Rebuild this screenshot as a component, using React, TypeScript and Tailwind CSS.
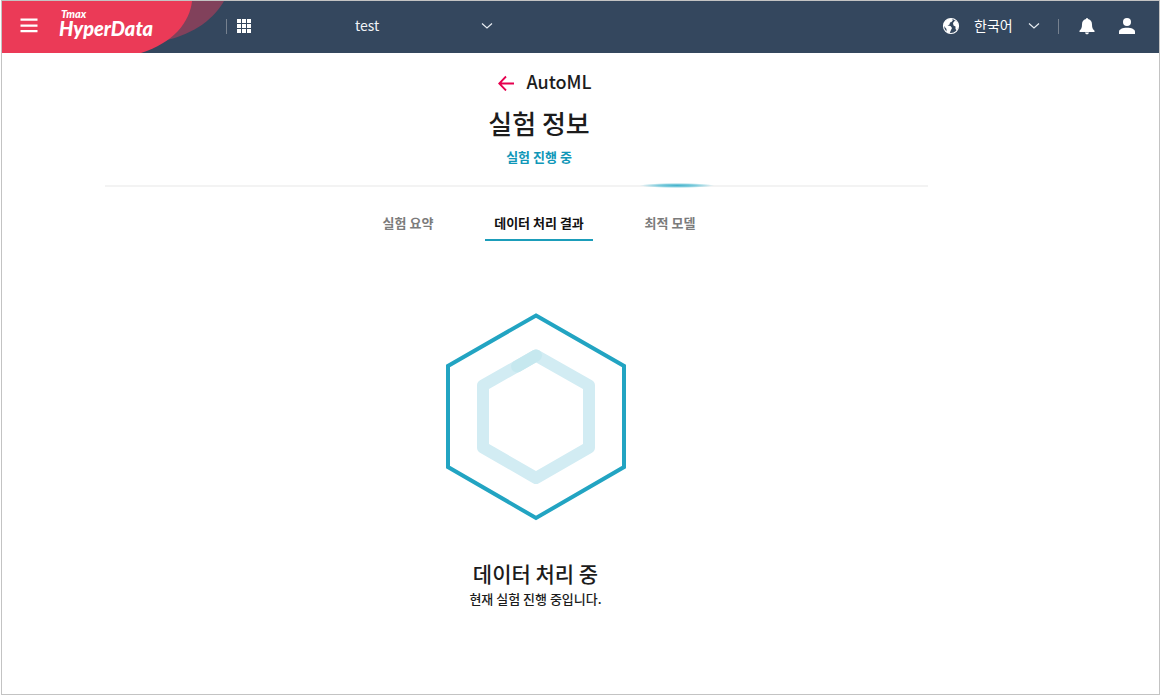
import React from "react";

const tabs = [
  { label: "실험 요약", active: false },
  { label: "데이터 처리 결과", active: true },
  { label: "최적 모델", active: false },
];

function Chevron() {
  return (
    <svg className="pointer-events-none h-3 w-3 shrink-0" viewBox="0 0 12 12" fill="none" stroke="#e8edf2" strokeWidth="1.2" aria-hidden="true">
      <path d="M1 4.500l5 4.500 5-4.500" />
    </svg>
  );
}

function Logo() {
  return (
    <a href="#home" className="flex flex-col pb-2 font-[Lato] font-black text-white italic" aria-label="Tmax HyperData">
      <span className="pl-0.5 text-[11px] leading-3">Tmax</span>
      <span className="text-[20px] leading-4">HyperData</span>
    </a>
  );
}

function Header() {
  return (
    <header className="relative flex h-[52px] items-center bg-[#34475e] pb-0.5">
      <svg className="absolute top-0 left-0 h-[52px] w-[224px]" viewBox="0 0 224 52" aria-hidden="true">
        <path d="M180 0H222C213 16 194 33 161 40Z" fill="#81415b" />
        <path d="M0 0H190C188 21 171 42 139 52H0Z" fill="#eb3a57" />
      </svg>
      <div className="relative flex w-[224px] shrink-0 items-center gap-[21px] pl-[18px]">
        <button type="button" aria-label="메뉴">
          <svg className="h-[18px] w-[18px]" viewBox="0 0 18 18" fill="#fff" aria-hidden="true">
            <path d="M.5 1.500h17v2.300H.5zM.5 7.500h17v2.300H.5zM.5 13h17v2.300H.5z" />
          </svg>
        </button>
        <Logo />
      </div>
      <span className="h-[15px] w-px bg-[#76818f]" />
      <button type="button" aria-label="앱 목록" className="ml-2.5">
        <svg className="h-3.5 w-3.5" viewBox="0 0 14 14" fill="#fff" aria-hidden="true">
          <path d="M0 0h4v4H0zM5 0h4v4H5zM10 0h4v4h-4zM0 5h4v4H0zM5 5h4v4H5zM10 5h4v4h-4zM0 10h4v4H0zM5 10h4v4H5zM10 10h4v4h-4z" />
        </svg>
      </button>
      <div className="ml-[104px] flex w-[138px] items-center pb-0.5">
        <select aria-label="프로젝트" className="-mr-3 min-w-0 flex-1 appearance-none bg-transparent text-sm leading-6 text-[#f0f3f6]">
          <option>test</option>
        </select>
        <Chevron />
      </div>
      <div className="ml-auto flex items-center pr-6">
        <svg className="mr-3.5 h-[18px] w-[18px]" viewBox="0 0 18 18" aria-hidden="true">
          <circle cx="9" cy="9" r="7.500" fill="#34475e" stroke="#fff" strokeWidth="1.200" />
          <path d="M9 1.500L11 3 9.500 5 8 5.500 7.500 7.500 5.500 8.500 8.500 9 10 11 9 13 7.500 16.500 4.500 15 4.500 12 2 9 2 5.500 5 2.500Z" fill="#fff" />
          <path d="M11 6L13 3.500 15.500 5.500 16.500 9 15 13.500 13.500 12 13.500 9.500 11.500 8.500Z" fill="#fff" />
        </svg>
        <div className="flex w-[66px] items-center pb-0.5">
          <select aria-label="언어" className="-mr-3 min-w-0 flex-1 appearance-none bg-transparent text-sm leading-6 text-white">
            <option>한국어</option>
          </select>
          <Chevron />
        </div>
        <span className="ml-[18px] h-[15px] w-px bg-[#76818f]" />
        <button type="button" aria-label="알림" className="ml-5">
          <svg className="h-[18px] w-4" viewBox="0 0 16 18" fill="#fff" aria-hidden="true">
            <path d="M7 2V1.200h2V2C11.800 2.600 13 4.600 13 7.500c0 3 .7 4.700 2.500 6.200V15H.5v-1.300C2.300 12.200 3 10.500 3 7.500 3 4.600 4.200 2.600 7 2zM6 15.500h4C9.800 16.700 9 17.300 8 17.300S6.200 16.700 6 15.500z" />
          </svg>
        </button>
        <button type="button" aria-label="사용자" className="ml-6">
          <svg className="h-[18px] w-4" viewBox="0 0 16 18" fill="#fff" aria-hidden="true">
            <circle cx="8" cy="5" r="4" />
            <path d="M0 17v-2.200C0 12.300 3.500 10.800 8 10.800s8 1.500 8 4V17z" />
          </svg>
        </button>
      </div>
    </header>
  );
}

export default function App() {
  return (
    <div className="h-screen pr-0.5 pb-px pl-px font-['Noto_Sans_CJK_KR',sans-serif]">
      <div className="flex h-full flex-col border border-[#c3c3c3] bg-white text-[#1c1c1c]">
        <Header />
        <main className="flex flex-col">
          <section className="flex flex-col items-center pt-3.5 pr-[83px]">
            <div className="flex items-center gap-3 pl-3">
              <button type="button" aria-label="뒤로">
                <svg className="mt-1 h-4 w-4" viewBox="0 0 16 16" fill="none" stroke="#e6004f" strokeWidth="1.800" aria-hidden="true">
                  <path d="M16 8.500H1.500M8 1.500L1.200 8.500 8 15.500" />
                </svg>
              </button>
              <h2 className="text-lg leading-7 font-medium">AutoML</h2>
            </div>
            <h1 className="mt-2 text-[26px] leading-10 font-medium">실험 정보</h1>
            <p className="mt-1 text-[13px] leading-5 font-bold text-[#1097b8]">실험 진행 중</p>
          </section>
          <div className="mt-4 mr-[231px] ml-[103px] flex h-1.5 items-center">
            <div className="relative h-0.5 w-full bg-[#f3f3f3]">
              <div className="absolute -top-0.5 left-[65%] h-[5px] w-[74px] bg-[radial-gradient(closest-side,#45b3cc,#7ccbdc_50%,transparent)]" />
            </div>
          </div>
          <nav className="mt-6 flex justify-center pr-[83px]">
            {tabs.map((tab) => (
              <button
                key={tab.label}
                type="button"
                className={
                  tab.active
                    ? "mx-3 w-[108px] border-b-2 border-[#1b9dba] pb-1.5 text-[13px] leading-5 font-bold text-[#111111]"
                    : "mx-3 w-[106px] border-b-2 border-transparent pb-1.5 text-[13px] leading-5 font-bold text-[#7b7b7b]"
                }
              >
                {tab.label}
              </button>
            ))}
          </nav>
          <section className="mt-[71px] flex flex-col items-center pr-[90px]">
            <svg className="h-[209px] w-[184px]" viewBox="0 0 184 209" fill="none" aria-hidden="true">
              <path d="M92 3.500L180 54V155L92 206 4 155V54Z" stroke="#22a4c2" strokeWidth="4" />
              <path d="M92 43.500L145 73.500V135.500L92 166 39 135.500V73.500Z" stroke="#d2ecf3" strokeWidth="12" strokeLinejoin="round" />
              <path d="M73 54.500L92 43.500" stroke="#c6e8ef" strokeWidth="12" strokeLinecap="round" />
            </svg>
            <p className="mt-9 text-[21px] leading-8 font-medium">데이터 처리 중</p>
            <p className="text-[13px] leading-5 font-medium">현재 실험 진행 중입니다.</p>
          </section>
        </main>
      </div>
    </div>
  );
}
